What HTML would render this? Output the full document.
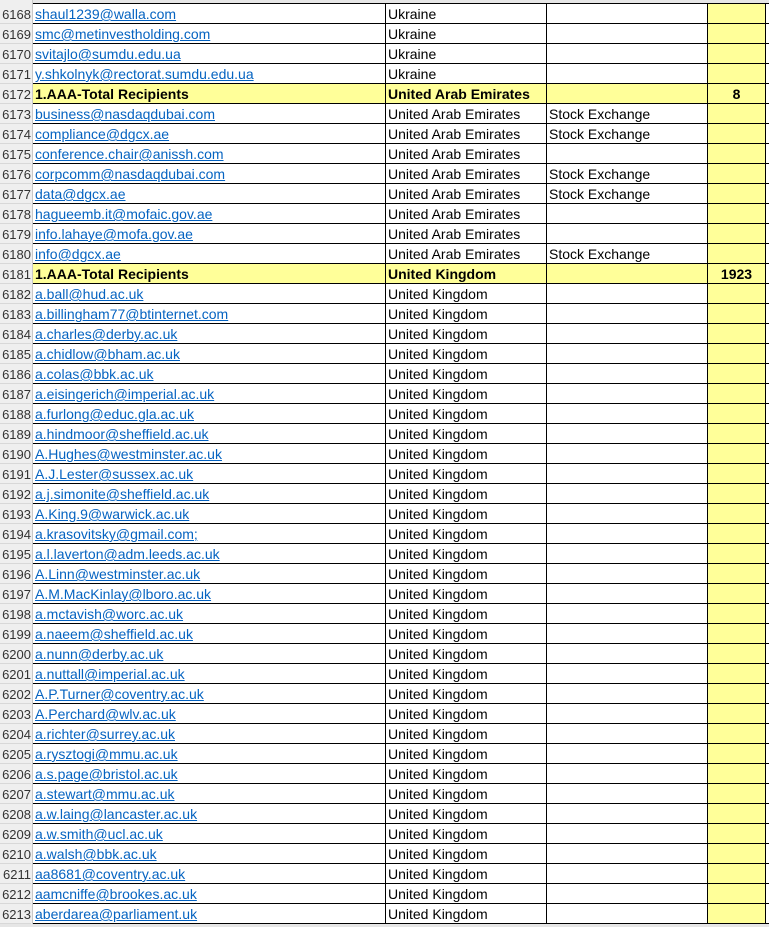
<!DOCTYPE html><html><head><style>
body{margin:0;width:769px;height:927px;overflow:hidden;background:#fff;font-family:"Liberation Sans",sans-serif;font-size:14px;position:relative}
.top{position:absolute;left:0;top:0;width:769px;height:3px;background:#e6e6e6}
.hdr{position:absolute;left:0;top:0;width:32px;height:927px;background:#efefef;border-right:1px solid #c8c8c8}
.r{position:absolute;left:0;width:769px;height:20px}
.n{position:absolute;left:0;width:31px;height:19px;line-height:21px;text-align:right;color:#333;font-size:13px;border-bottom:1px solid #d8d8d8}
.c{position:absolute;top:0;height:19px;line-height:21px;border-bottom:1px solid #000;border-right:1px solid #000;white-space:nowrap;overflow:hidden;padding-left:2px;box-sizing:content-box}
.a{left:33px;width:350px}
.b{left:386px;width:158px}
.cc{left:547px;width:158px}
.d{left:708px;width:57px;background:#ffff99;padding-left:0;text-align:center}
.e{left:766px;width:3px;border-right:none;padding:0}
.a span{color:#0563c1;text-decoration:underline}
.y .a,.y .b,.y .cc,.y .d{background:#ffff99;font-weight:bold}
.bot{position:absolute;left:0;top:924px;width:769px;height:3px;background:#e6e6e6}
</style></head><body>
<div class="top"></div><div class="hdr"></div>
<div id="g"></div>
<div class="bot"></div>
<script>
var rows=[
["shaul1239@walla.com","Ukraine",""],
["smc@metinvestholding.com","Ukraine",""],
["svitajlo@sumdu.edu.ua","Ukraine",""],
["y.shkolnyk@rectorat.sumdu.edu.ua","Ukraine",""],
["*","United Arab Emirates","","8"],
["business@nasdaqdubai.com","United Arab Emirates","Stock Exchange"],
["compliance@dgcx.ae","United Arab Emirates","Stock Exchange"],
["conference.chair@anissh.com","United Arab Emirates",""],
["corpcomm@nasdaqdubai.com","United Arab Emirates","Stock Exchange"],
["data@dgcx.ae","United Arab Emirates","Stock Exchange"],
["hagueemb.it@mofaic.gov.ae","United Arab Emirates",""],
["info.lahaye@mofa.gov.ae","United Arab Emirates",""],
["info@dgcx.ae","United Arab Emirates","Stock Exchange"],
["*","United Kingdom","","1923"]];
var uk="a.ball@hud.ac.uk a.billingham77@btinternet.com a.charles@derby.ac.uk a.chidlow@bham.ac.uk a.colas@bbk.ac.uk a.eisingerich@imperial.ac.uk a.furlong@educ.gla.ac.uk a.hindmoor@sheffield.ac.uk A.Hughes@westminster.ac.uk A.J.Lester@sussex.ac.uk a.j.simonite@sheffield.ac.uk A.King.9@warwick.ac.uk a.krasovitsky@gmail.com; a.l.laverton@adm.leeds.ac.uk A.Linn@westminster.ac.uk A.M.MacKinlay@lboro.ac.uk a.mctavish@worc.ac.uk a.naeem@sheffield.ac.uk a.nunn@derby.ac.uk a.nuttall@imperial.ac.uk A.P.Turner@coventry.ac.uk A.Perchard@wlv.ac.uk a.richter@surrey.ac.uk a.rysztogi@mmu.ac.uk a.s.page@bristol.ac.uk a.stewart@mmu.ac.uk a.w.laing@lancaster.ac.uk a.w.smith@ucl.ac.uk a.walsh@bbk.ac.uk aa8681@coventry.ac.uk aamcniffe@brookes.ac.uk aberdarea@parliament.uk".split(" ");
uk.forEach(function(e){rows.push([e,"United Kingdom",""])});
var h="";
rows.forEach(function(r,i){
var t=4+i*20,y=r[0]=="*";
h+='<div class="r'+(y?' y':'')+'" style="top:'+t+'px"><div class="n">'+(6168+i)+'</div>'+
'<div class="c a">'+(y?'1.AAA-Total Recipients':'<span>'+r[0]+'</span>')+'</div>'+
'<div class="c b">'+r[1]+'</div><div class="c cc">'+r[2]+'</div><div class="c d">'+(r[3]||'')+'</div><div class="c e"></div></div>';
});
document.getElementById("g").innerHTML=h;
</script>
<div style="position:absolute;left:33px;top:3px;width:736px;height:1px;background:#000"></div>
</body></html>
